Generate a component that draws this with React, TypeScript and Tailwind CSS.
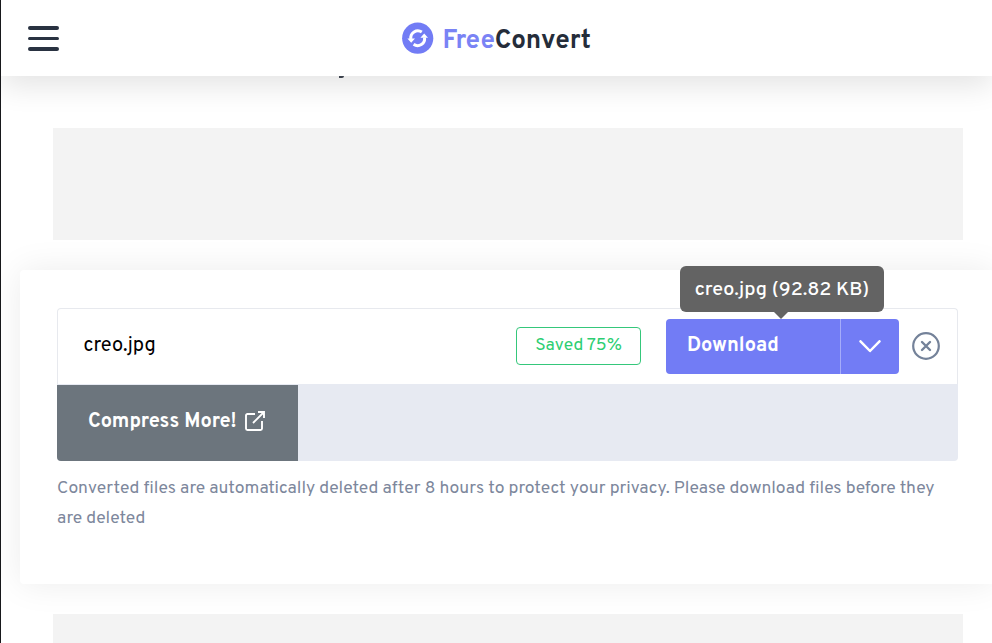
import React from "react";

function LogoMark() {
  return (
    <svg viewBox="0 0 32 32" className="h-8 w-8 shrink-0" fill="none">
      <circle cx="15.7" cy="16.2" r="15.6" fill="#727cf5" />
      <path d="M8.9 17A7 7 0 0 1 19.8 10.1M22.5 15.4A7 7 0 0 1 11.6 22.300" stroke="#fff" strokeWidth="3" />
      <path d="M5.400 16.600h7.600l-3.800 4.200zM26 15.800h-7.600l3.800-4.200z" fill="#fff" />
    </svg>
  );
}

function Header() {
  return (
    <header className="relative z-10 grid h-[76px] shrink-0 grid-cols-[1fr_auto_1fr] items-center bg-white shadow-[0_10px_30px_rgba(0,0,0,0.11)]">
      <button className="ml-[27px] flex w-[31px] flex-col gap-[7px] pt-px" aria-label="Menu">
        <span className="h-[3.5px] w-full rounded-sm bg-[#293241]" />
        <span className="h-[3.5px] w-full rounded-sm bg-[#293241]" />
        <span className="h-[3.5px] w-full rounded-sm bg-[#293241]" />
      </button>
      <div className="flex items-center gap-[9px]">
        <LogoMark />
        <span className="h-8 w-[149px] pt-[3.5px] text-[26px] leading-8 font-bold whitespace-nowrap text-[#252d3a]">
          <span className="text-[#7a83f5]">Free</span>Convert
        </span>
      </div>
    </header>
  );
}

function DownloadButton() {
  return (
    <div className="relative flex h-[55px] w-[233px] rounded bg-[#727cf5] text-white">
      <button className="w-[174px] pb-[2px] pl-[21px] text-left text-[20px] font-bold">Download</button>
      <button className="flex flex-1 items-center justify-center border-l border-[#a5acfa]" aria-label="More options">
        <svg viewBox="0 0 22 14" className="h-[14px] w-[22px]" fill="none">
          <path d="m1.5 1.3 9.5 9.7 9.5-9.7" stroke="#fff" strokeWidth="2.5" strokeLinecap="round" strokeLinejoin="round" />
        </svg>
      </button>
      <div className="absolute -top-[53px] left-[14px] flex h-[46px] w-[204px] justify-center rounded-md bg-[#636363] pt-[10.5px] text-[19.8px] leading-[28px] font-medium whitespace-nowrap">
        creo.jpg (92.82 KB)
        <svg viewBox="0 0 14 7" className="absolute top-[46px] left-[94px] h-[7px] w-[14px]">
          <path d="M0 0h14L7 7z" fill="#636363" />
        </svg>
      </div>
    </div>
  );
}

function FileRow() {
  return (
    <div className="flex h-[76px] items-center rounded-t border border-b-0 border-[#e7e9ee] pr-[17px] pl-[25.5px]">
      <span className="flex-1 pb-[1px] text-[20px] text-black">creo.jpg</span>
      <span className="mr-[25px] mb-[2px] flex h-[38px] w-[125px] justify-center rounded border border-[#35c77b] pt-[5px] text-[17.5px] leading-[26px] text-[#2dce72]">
        Saved 75%
      </span>
      <DownloadButton />
      <button className="mb-[2px] ml-[13px]" aria-label="Remove">
        <svg viewBox="0 0 28 28" className="h-7 w-7" fill="none" stroke="#748299">
          <circle cx="14" cy="14" r="12.8" strokeWidth="2.2" />
          <path d="m10 10 8 8m0-8-8 8" strokeWidth="2.4" strokeLinecap="round" />
        </svg>
      </button>
    </div>
  );
}

export default function App() {
  return (
    <div className="flex h-[643px] w-[992px] flex-col overflow-hidden border-l border-[#17181b] bg-white font-['Overpass','Roboto',sans-serif]">
      <Header />
      <div className="relative z-10 ml-[338px] h-[2px] w-[5px] shrink-0 rounded-br-full bg-[#3b414c]" />
      <div className="mt-[50px] ml-[52px] h-[112px] w-[910px] shrink-0 bg-[#f3f3f3]" />

      <main className="mt-[30px] ml-[19px] h-[314px] w-[974px] shrink-0 rounded bg-white px-[37px] pt-[38px] shadow-[0_0_35px_rgba(0,0,0,0.08)]">
        <div className="w-[901px]">
          <FileRow />
          <div className="flex h-[77px] overflow-hidden rounded-b bg-[#e7eaf2]">
            <button className="mt-px flex w-[241px] gap-[7px] bg-[#6c757d] pt-[23px] pl-[31px] text-[20px] leading-7 font-bold whitespace-nowrap text-white">
              <span className="w-[150px] text-left">Compress More!</span>
              <svg viewBox="0 0 20 20" className="mt-[3px] h-5 w-5" fill="none" stroke="#fff" strokeWidth="1.9">
                <path d="M10 3H2.5A1.5 1.5 0 0 0 1 4.5v13A1.5 1.5 0 0 0 2.5 19h13a1.5 1.5 0 0 0 1.5-1.5V10M8 12 18.5 1.5M13 1h6v6" />
              </svg>
            </button>
          </div>
          <p className="pt-[13px] text-[17.5px] leading-[30px] text-[#7d879c]">
            Converted files are automatically deleted after 8 hours to protect your privacy. Please download files before they
            <br />
            are deleted
          </p>
        </div>
      </main>

      <div className="relative mt-[30px] ml-[52px] h-[112px] w-[910px] shrink-0 bg-[#f3f3f3]" />
    </div>
  );
}
